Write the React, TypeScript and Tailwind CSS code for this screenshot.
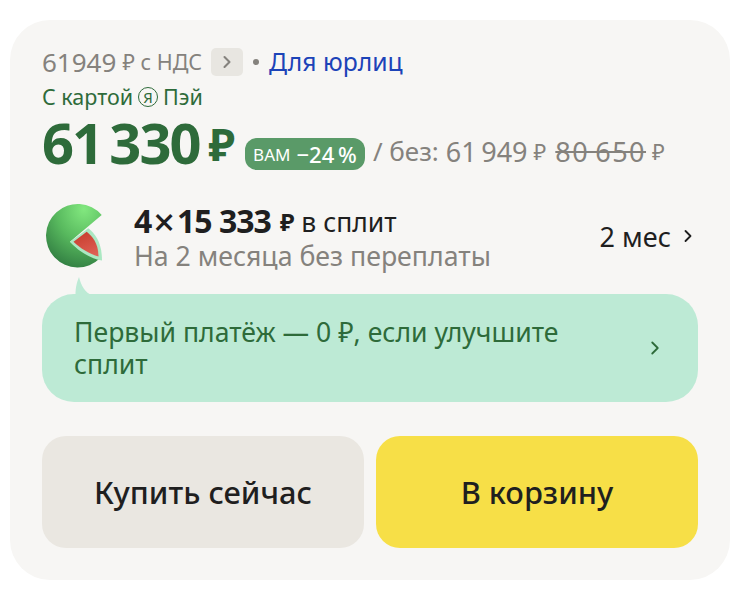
import { ChevronRight } from "lucide-react";

function Melon() {
  return (
    <svg width="66" height="66" viewBox="0 0 66 66" className="ml-[3px] shrink-0">
      <defs>
        <radialGradient id="skin" cx="0.68" cy="0.08" r="1">
          <stop offset="0" stopColor="#82e87f" />
          <stop offset="0.5" stopColor="#58b95e" />
          <stop offset="1" stopColor="#2f7a40" />
        </radialGradient>
        <linearGradient id="flesh" x1="0.3" y1="0" x2="0.7" y2="1">
          <stop offset="0" stopColor="#c83e2e" />
          <stop offset="1" stopColor="#de6055" />
        </linearGradient>
      </defs>
      <path d="M56.7 12 A31.7 31.7 0 1 0 55 55.3 C46 53 33 47 25 38.7 Z" fill="url(#skin)" />
      <path d="M25 38.7 L43.3 25.3 C50 31 57 39 57 57.5 C46 56 33 48 25 38.7 Z" fill="#abe8c2" />
      <path d="M28.5 38.7 L41.7 28.7 C47 33 53.5 40 53.5 53.5 C46 51.5 36 46 28.5 38.7 Z" fill="url(#flesh)" />
    </svg>
  );
}

export default function App() {
  return (
    <div className="h-[596px] w-[748px] overflow-hidden bg-white pl-[10px] pt-[20px] font-['Noto_Sans',sans-serif]">
      <div className="flex h-[560px] w-[720px] flex-col rounded-[40px] bg-[#f7f6f4] px-[32px] pt-[26px]">
        <div className="flex h-[32px] items-center text-[26px] leading-none text-[#85827d]">
          <span>61949</span>
          <span className="ml-[6px] text-[21.5px]">₽ с НДС</span>
          <span className="ml-[9px] flex h-[28px] w-[32px] items-center justify-center rounded-[5px] bg-[#e8e6e1]">
            <ChevronRight size={20} strokeWidth={2.5} />
          </span>
          <span className="ml-[10px] h-[6px] w-[6px] rounded-full bg-[#85827d]" />
          <span className="ml-[10px] text-[24.7px] text-[#1c43b8]">Для юрлиц</span>
        </div>
        <div className="mt-[6px] flex h-[26px] items-center text-[21.5px] leading-none text-[#2e6b3a]">
          <span>С картой</span>
          <span className="mx-[5px] flex h-[20px] w-[20px] items-center justify-center rounded-full border border-[#2e6b3a] text-[15px] leading-none">Я</span>
          <span>Пэй</span>
        </div>
        <div className="mt-[3px] flex h-[58px] items-center">
          <span className="text-[56px] font-bold leading-none tracking-[-2px] text-[#2e6b3a]">{"61\u2009330"}</span>
          <span className="ml-[9px] mt-[4px] text-[44px] font-bold leading-none text-[#2e6b3a]">₽</span>
          <span className="ml-[10px] mt-[24px] flex h-[32px] w-[120px] items-center justify-center rounded-[12px] bg-[#5a9a68] text-white">
            <span className="text-[17px] leading-none">ВАМ</span>
            <span className="ml-[6px] text-[22px] font-medium leading-none">{"−24\u2009%"}</span>
          </span>
          <span className="ml-[8px] mt-[18px] text-[26px] leading-none text-[#85827d]">/ без:</span>
          <span className="ml-[7px] mt-[18px] text-[27px] leading-none text-[#85827d]">{"61\u2009949"}</span>
          <span className="ml-[6px] mt-[18px] text-[22px] leading-none text-[#85827d]">₽</span>
          <span className="ml-[9px] mt-[18px] text-[27px] leading-none tracking-[1.5px] text-[#85827d] line-through">{"80\u2009650"}</span>
          <span className="ml-[6px] mt-[18px] text-[22px] leading-none text-[#85827d]">₽</span>
        </div>
        <div className="mt-[32px] flex items-start">
          <Melon />
          <div className="ml-[23px] flex flex-1 flex-col">
            <div className="flex h-[36px] items-center text-[26.5px] leading-none text-[#1f1f1f]">
              <span className="text-[32px] font-bold leading-none tracking-[-1px]">4</span>
              <span className="mx-[2px] text-[38px] font-medium leading-none">×</span>
              <span className="text-[32px] font-bold leading-none tracking-[-1px]">15 333</span>
              <span className="ml-[9px] mt-[2px] text-[24px] font-bold">₽</span>
              <span className="ml-[7px] mt-[2px]">в сплит</span>
            </div>
            <div className="mt-[2px] text-[26.7px] leading-[30px] text-[#85827d]">На 2 месяца без переплаты</div>
          </div>
          <div className="flex h-[66px] items-center text-[27px] leading-none text-[#1f1f1f]">
            <span>2 мес</span>
            <ChevronRight size={20} strokeWidth={2.2} className="ml-[7px]" />
          </div>
        </div>
        <div className="relative mt-[23px] flex h-[108px] items-center justify-between rounded-[32px] bg-[#bdead5] px-[32px] text-[26.6px] leading-[32px] text-[#2e6b3a]">
          <svg width="18" height="18" viewBox="0 0 18 18" className="absolute left-[32px] top-[-17px]">
            <path d="M5 0 C3 5 1.5 10 1.5 18 L18 18 C11 16 7 8 5 0 Z" fill="#bdead5" />
          </svg>
          <span className="w-[520px]">Первый платёж — 0 ₽, если улучшите сплит</span>
          <ChevronRight size={22} strokeWidth={2} />
        </div>
        <div className="mt-[34px] flex gap-[12px]">
          <button className="h-[112px] flex-1 rounded-[24px] bg-[#eae7e1] text-[30.8px] font-medium text-[#1f1f1f]">Купить сейчас</button>
          <button className="h-[112px] flex-1 rounded-[24px] bg-[#f7df47] text-[30.8px] font-medium text-[#1f1f1f]">В корзину</button>
        </div>
      </div>
    </div>
  );
}
